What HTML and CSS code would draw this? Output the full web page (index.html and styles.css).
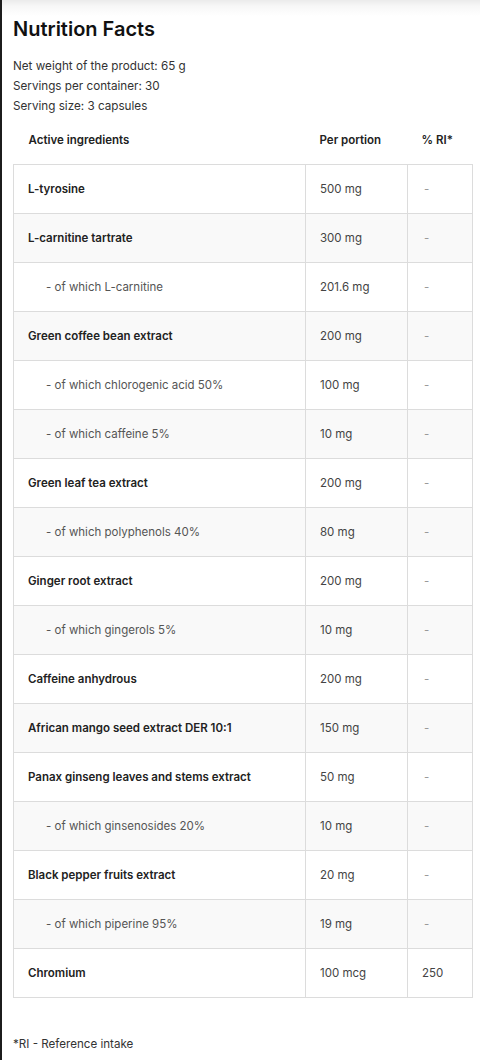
FILE: index.html
```html
<!DOCTYPE html>
<html lang="en">
<head>
<meta charset="utf-8">
<link rel="stylesheet" href="styles.css">
</head>
<body>
<div class="page">
  <h1 class="title">Nutrition Facts</h1>
  <div class="info">
    <p>Net weight of the product: 65 g</p>
    <p>Servings per container: 30</p>
    <p>Serving size: 3 capsules</p>
  </div>
  <table class="facts">
    <thead>
      <tr><th class="c1">Active ingredients</th><th class="c2">Per portion</th><th class="c3">% RI*</th></tr>
    </thead>
    <tbody>
      <tr><td class="name">L-tyrosine</td><td>500 mg</td><td class="ri">-</td></tr>
      <tr><td class="name">L-carnitine tartrate</td><td>300 mg</td><td class="ri">-</td></tr>
      <tr><td class="sub">- of which L-carnitine</td><td>201.6 mg</td><td class="ri">-</td></tr>
      <tr><td class="name">Green coffee bean extract</td><td>200 mg</td><td class="ri">-</td></tr>
      <tr><td class="sub">- of which chlorogenic acid 50%</td><td>100 mg</td><td class="ri">-</td></tr>
      <tr><td class="sub">- of which caffeine 5%</td><td>10 mg</td><td class="ri">-</td></tr>
      <tr><td class="name">Green leaf tea extract</td><td>200 mg</td><td class="ri">-</td></tr>
      <tr><td class="sub">- of which polyphenols 40%</td><td>80 mg</td><td class="ri">-</td></tr>
      <tr><td class="name">Ginger root extract</td><td>200 mg</td><td class="ri">-</td></tr>
      <tr><td class="sub">- of which gingerols 5%</td><td>10 mg</td><td class="ri">-</td></tr>
      <tr><td class="name">Caffeine anhydrous</td><td>200 mg</td><td class="ri">-</td></tr>
      <tr><td class="name">African mango seed extract DER 10:1</td><td>150 mg</td><td class="ri">-</td></tr>
      <tr><td class="name">Panax ginseng leaves and stems extract</td><td>50 mg</td><td class="ri">-</td></tr>
      <tr><td class="sub">- of which ginsenosides 20%</td><td>10 mg</td><td class="ri">-</td></tr>
      <tr><td class="name">Black pepper fruits extract</td><td>20 mg</td><td class="ri">-</td></tr>
      <tr><td class="sub">- of which piperine 95%</td><td>19 mg</td><td class="ri">-</td></tr>
      <tr><td class="name">Chromium</td><td>100 mcg</td><td>250</td></tr>
    </tbody>
  </table>
  <p class="note">*RI - Reference intake</p>
</div>
</body>
</html>
```
FILE: styles.css
```css
html, body {
  margin: 0;
  padding: 0;
  background: #fff;
}
body {
  font-family: "Inter", "Liberation Sans", sans-serif;
  color: #333;
}
.page {
  box-sizing: border-box;
  height: 1060px;
  border-left: 2px solid #1c1c1c;
  padding: 17px 8px 0 11px;
  background: linear-gradient(to bottom, #ebebeb 0, #f7f7f7 6px, #ffffff 16px);
}
.title {
  margin: 0;
  font-size: 20px;
  line-height: 24px;
  font-weight: 600;
  color: #111;
}
.info {
  margin-top: 15px;
  font-size: 11.7px;
  line-height: 20px;
  color: #333;
}
.info p {
  margin: 0;
}
.facts {
  width: 459px;
  border-collapse: collapse;
  table-layout: fixed;
  font-size: 11.5px;
}
.facts th,
.facts td {
  box-sizing: border-box;
}
.facts th {
  height: 48px;
  padding: 0 0 0 15px;
  text-align: left;
  font-weight: 600;
  color: #222;
  font-size: 11.5px;
  border: none;
}
.facts .c1 { width: 292px; }
.facts .c2 { width: 102px; padding-left: 14px; }
.facts .c3 { width: 65px; padding-left: 14px; }
.facts td {
  height: 49px;
  padding: 0 0 0 14px;
  border: 1px solid #dcdcdc;
  color: #444;
  vertical-align: middle;
}
.facts tbody tr:nth-child(even) td {
  background: #f9f9f9;
}
.facts td.name {
  font-weight: 600;
  color: #222;
}
.facts td.sub {
  padding-left: 32px;
  color: #555;
}
.facts td.ri {
  padding-left: 16px;
  color: #999;
}
.note {
  margin: 38px 0 0;
  font-size: 11.6px;
  line-height: 16px;
  color: #333;
}
```
